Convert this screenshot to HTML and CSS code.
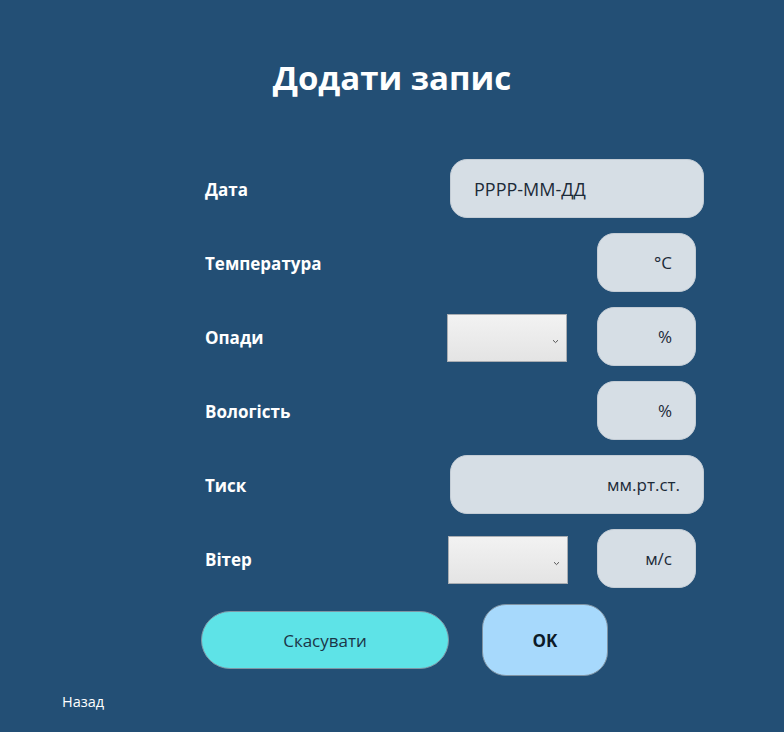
FILE: index.html
```html
<!DOCTYPE html>
<html lang="uk">
<head>
<meta charset="utf-8">
<title>Додати запис</title>
<link rel="stylesheet" href="styles.css">
</head>
<body>
<div class="page">
  <h1 class="title">Додати запис</h1>
  <div class="form">
    <div class="label r1">Дата</div>
    <div class="field wide r1 left">РРРР-ММ-ДД</div>

    <div class="label r2">Температура</div>
    <div class="field small r2">°C</div>

    <div class="label r3">Опади</div>
    <div class="select r3"><svg class="chev" width="7" height="5" viewBox="0 0 7 5"><path d="M1 1.2 L3.5 3.6 L6 1.2" fill="none" stroke="#555" stroke-width="1"/></svg></div>
    <div class="field small r3">%</div>

    <div class="label r4">Вологість</div>
    <div class="field small r4">%</div>

    <div class="label r5">Тиск</div>
    <div class="field wide r5">мм.рт.ст.</div>

    <div class="label r6">Вітер</div>
    <div class="select r6 sel2"><svg class="chev" width="7" height="5" viewBox="0 0 7 5"><path d="M1 1.2 L3.5 3.6 L6 1.2" fill="none" stroke="#555" stroke-width="1"/></svg></div>
    <div class="field small r6">м/с</div>
  </div>
  <div class="buttons">
    <button class="btn cancel">Скасувати</button>
    <button class="btn ok">OK</button>
  </div>
  <div class="back">Назад</div>
</div>
</body>
</html>
```
FILE: styles.css
```css
html, body {
  margin: 0;
  padding: 0;
  background: #234f75;
}
body {
  font-family: "Open Sans", "Noto Sans", sans-serif;
  color: #ffffff;
  width: 784px;
  height: 732px;
  overflow: hidden;
}
.page {
  display: flex;
  flex-direction: column;
  height: 732px;
}
.title {
  margin: 56px 0 0 0;
  text-align: center;
  font-size: 33px;
  font-weight: 700;
  line-height: 44px;
  height: 44px;
}
.form {
  margin: 59px 0 0 205px;
  width: 499px;
  display: grid;
  grid-template-columns: 242px 120px 30px 99px 8px;
  grid-auto-rows: 59px;
  row-gap: 15px;
}
.r1 { grid-row: 1; }
.r2 { grid-row: 2; }
.r3 { grid-row: 3; }
.r4 { grid-row: 4; }
.r5 { grid-row: 5; }
.r6 { grid-row: 6; }
.label {
  grid-column: 1;
  display: flex;
  align-items: center;
  font-size: 17px;
  font-weight: 700;
  color: #ffffff;
  padding-top: 2px;
}
.field {
  background: #d6dee5;
  border: 1px solid #c3ccd5;
  border-radius: 17px;
  display: flex;
  align-items: center;
  justify-content: flex-end;
  padding: 0 23px;
  font-size: 17px;
  color: #1c2a38;
  box-sizing: border-box;
}
.field.wide {
  grid-column: 2 / 6;
  margin-left: 3px;
}
.field.left {
  justify-content: flex-start;
  font-size: 18px;
}
.field.small {
  grid-column: 4;
}
.select {
  grid-column: 2;
  align-self: center;
  height: 48px;
  margin-top: 3px;
  width: 120px;
  box-sizing: border-box;
  border: 1px solid #a9adb2;
  background: linear-gradient(#f2f2f2, #e4e4e4);
  display: flex;
  align-items: center;
  justify-content: flex-end;
  padding: 6px 7px 0 0;
}
.select.sel2 {
  margin-left: 1px;
}
.buttons {
  display: flex;
  align-items: center;
  margin: 16px 0 0 201px;
  gap: 33px;
}
.btn {
  font-family: "Open Sans", "Noto Sans", sans-serif;
  font-size: 17px;
  cursor: pointer;
}
.cancel {
  width: 248px;
  height: 58px;
  border-radius: 29px;
  background: #5ee3e7;
  border: 1px solid #7f97a6;
  color: #1b3547;
}
.ok {
  width: 126px;
  height: 72px;
  border-radius: 24px;
  background: #a7d9fc;
  border: 1px solid #7f93a3;
  color: #0c1a28;
  font-weight: 700;
  font-size: 17px;
}
.back {
  margin: 16px 0 0 62px;
  font-size: 14.5px;
  color: #ffffff;
}
```
